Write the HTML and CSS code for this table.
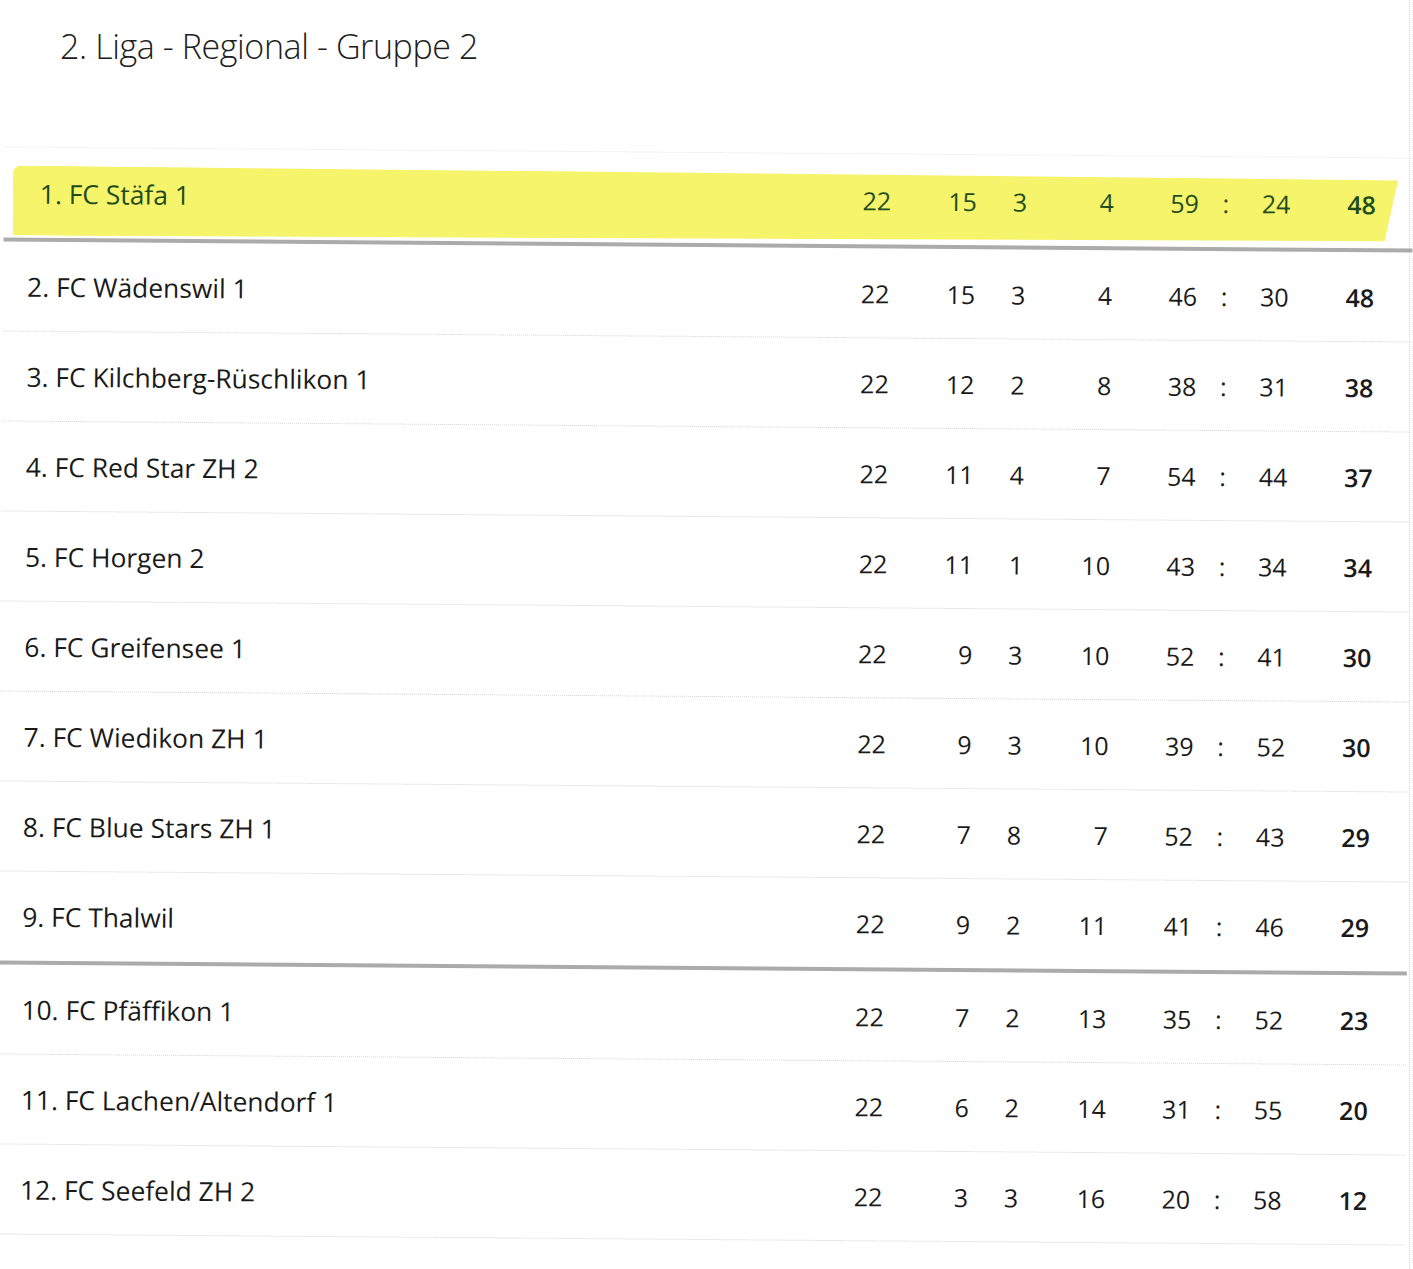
FILE: index.html
```html
<!DOCTYPE html>
<html lang="de">
<head>
<meta charset="utf-8">
<title>2. Liga - Regional - Gruppe 2</title>
<link rel="stylesheet" href="styles.css">
</head>
<body>
<div class="page">
  <h1 class="title">2. Liga - Regional - Gruppe 2</h1>
  <div class="table">
    <div class="row first sep-thick">
      <div class="cells hl">
        <span class="name">1. FC Stäfa 1</span><span class="n c">22</span><span class="n r">15</span><span class="n c">3</span><span class="n r">4</span><span class="n r">59</span><span class="n c">:</span><span class="n l">24</span><span class="n r pts">48</span>
      </div>
    </div>
    <div class="row">
      <div class="cells">
        <span class="name">2. FC Wädenswil 1</span><span class="n c">22</span><span class="n r">15</span><span class="n c">3</span><span class="n r">4</span><span class="n r">46</span><span class="n c">:</span><span class="n l">30</span><span class="n r pts">48</span>
      </div>
    </div>
    <div class="row">
      <div class="cells">
        <span class="name">3. FC Kilchberg-Rüschlikon 1</span><span class="n c">22</span><span class="n r">12</span><span class="n c">2</span><span class="n r">8</span><span class="n r">38</span><span class="n c">:</span><span class="n l">31</span><span class="n r pts">38</span>
      </div>
    </div>
    <div class="row">
      <div class="cells">
        <span class="name">4. FC Red Star ZH 2</span><span class="n c">22</span><span class="n r">11</span><span class="n c">4</span><span class="n r">7</span><span class="n r">54</span><span class="n c">:</span><span class="n l">44</span><span class="n r pts">37</span>
      </div>
    </div>
    <div class="row">
      <div class="cells">
        <span class="name">5. FC Horgen 2</span><span class="n c">22</span><span class="n r">11</span><span class="n c">1</span><span class="n r">10</span><span class="n r">43</span><span class="n c">:</span><span class="n l">34</span><span class="n r pts">34</span>
      </div>
    </div>
    <div class="row">
      <div class="cells">
        <span class="name">6. FC Greifensee 1</span><span class="n c">22</span><span class="n r">9</span><span class="n c">3</span><span class="n r">10</span><span class="n r">52</span><span class="n c">:</span><span class="n l">41</span><span class="n r pts">30</span>
      </div>
    </div>
    <div class="row">
      <div class="cells">
        <span class="name">7. FC Wiedikon ZH 1</span><span class="n c">22</span><span class="n r">9</span><span class="n c">3</span><span class="n r">10</span><span class="n r">39</span><span class="n c">:</span><span class="n l">52</span><span class="n r pts">30</span>
      </div>
    </div>
    <div class="row">
      <div class="cells">
        <span class="name">8. FC Blue Stars ZH 1</span><span class="n c">22</span><span class="n r">7</span><span class="n c">8</span><span class="n r">7</span><span class="n r">52</span><span class="n c">:</span><span class="n l">43</span><span class="n r pts">29</span>
      </div>
    </div>
    <div class="row sep-thick">
      <div class="cells">
        <span class="name">9. FC Thalwil</span><span class="n c">22</span><span class="n r">9</span><span class="n c">2</span><span class="n r">11</span><span class="n r">41</span><span class="n c">:</span><span class="n l">46</span><span class="n r pts">29</span>
      </div>
    </div>
    <div class="row">
      <div class="cells">
        <span class="name">10. FC Pfäffikon 1</span><span class="n c">22</span><span class="n r">7</span><span class="n c">2</span><span class="n r">13</span><span class="n r">35</span><span class="n c">:</span><span class="n l">52</span><span class="n r pts">23</span>
      </div>
    </div>
    <div class="row">
      <div class="cells">
        <span class="name">11. FC Lachen/Altendorf 1</span><span class="n c">22</span><span class="n r">6</span><span class="n c">2</span><span class="n r">14</span><span class="n r">31</span><span class="n c">:</span><span class="n l">55</span><span class="n r pts">20</span>
      </div>
    </div>
    <div class="row">
      <div class="cells">
        <span class="name">12. FC Seefeld ZH 2</span><span class="n c">22</span><span class="n r">3</span><span class="n c">3</span><span class="n r">16</span><span class="n r">20</span><span class="n c">:</span><span class="n l">58</span><span class="n r pts">12</span>
      </div>
    </div>
  </div>
</div>
</body>
</html>
```
FILE: styles.css
```css
html, body {
  margin: 0;
  padding: 0;
  background: #ffffff;
}

body {
  font-family: "Open Sans", "Liberation Sans", sans-serif;
  color: #1a1a1a;
  width: 1413px;
  height: 1269px;
  overflow: hidden;
}

.page {
  width: 1409px;
  height: 1269px;
  border-right: 1px dotted #dcdcdc;
}

.title {
  margin: 0;
  padding: 22px 0 0 60px;
  height: 152px;
  box-sizing: border-box;
  font-size: 34px;
  font-weight: 300;
  letter-spacing: -0.4px;
  line-height: 48px;
  color: #202020;
}

.table {
  border-top: 1px dotted #e4e4e4;
  transform: rotate(0.45deg);
  transform-origin: 50% 50%;
}

.row {
  height: 89px;
  display: flex;
  align-items: center;
  border-bottom: 1px dotted #d4d4d4;
}

.row.first {
  height: 94px;
  align-items: flex-end;
  padding-bottom: 2px;
  box-sizing: border-box;
}

.row.sep-thick {
  border-bottom: 4px solid #ababab;
}

.cells {
  flex: 1;
  display: grid;
  grid-template-columns: 825px 46px 77px 86px 51px 85px 54px 71px 52px;
  align-items: center;
  padding-left: 24px;
  font-size: 25px;
  line-height: 34px;
}

.cells.hl {
  margin: 0 15px 0 9px;
  padding-left: 27px;
  padding-bottom: 14px;
  height: 70px;
  box-sizing: border-box;
  grid-template-columns: 814px 46px 77px 86px 51px 85px 54px 71px 52px;
  background: #f5f46a;
  color: #1e4c1d;
  clip-path: polygon(0 5px, 5px 0, 100% 4px, calc(100% - 13px) calc(100% - 5px), 0 100%);
}

.name {
  white-space: nowrap;
  font-size: 26.4px;
}

.c { text-align: center; }
.r { text-align: right; }
.l { text-align: left; padding-left: 9px; }

.pts {
  font-weight: 600;
}
```
